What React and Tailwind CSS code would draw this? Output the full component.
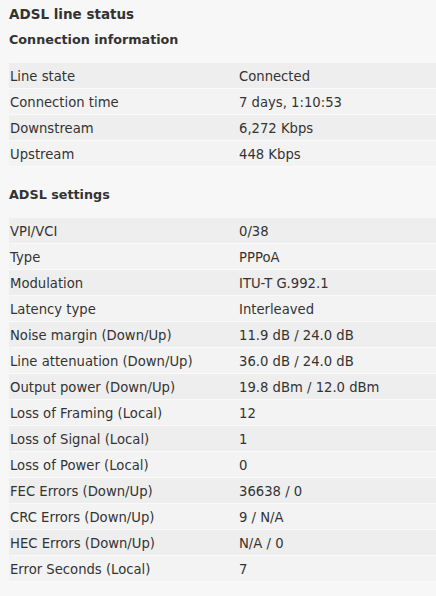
const connection = [
  ["Line state", "Connected"],
  ["Connection time", "7 days, 1:10:53"],
  ["Downstream", "6,272 Kbps"],
  ["Upstream", "448 Kbps"],
];

const settings = [
  ["VPI/VCI", "0/38"],
  ["Type", "PPPoA"],
  ["Modulation", "ITU-T G.992.1"],
  ["Latency type", "Interleaved"],
  ["Noise margin (Down/Up)", "11.9 dB / 24.0 dB"],
  ["Line attenuation (Down/Up)", "36.0 dB / 24.0 dB"],
  ["Output power (Down/Up)", "19.8 dBm / 12.0 dBm"],
  ["Loss of Framing (Local)", "12"],
  ["Loss of Signal (Local)", "1"],
  ["Loss of Power (Local)", "0"],
  ["FEC Errors (Down/Up)", "36638 / 0"],
  ["CRC Errors (Down/Up)", "9 / N/A"],
  ["HEC Errors (Down/Up)", "N/A / 0"],
  ["Error Seconds (Local)", "7"],
];

function InfoTable({ rows }) {
  return (
    <div className="flex flex-col">
      {rows.map(([label, value], i) => (
        <div
          key={label}
          className={`flex h-[26px] items-center border-b border-[#fafafa] pl-[1px] pt-[2px] ${
            i % 2 === 0 ? "bg-[#eeeeee]" : "bg-[#f3f3f3]"
          }`}
        >
          <span className="w-[229px] shrink-0">{label}</span>
          <span>{value}</span>
        </div>
      ))}
    </div>
  );
}

export default function App() {
  return (
    <div className="min-h-[596px] bg-[#f7f7f7] pl-[9px] pt-[5px] text-[13.2px] text-[#333] font-['DejaVu_Sans',sans-serif]">
      <h1 className="text-[13.5px] font-bold leading-[18px]">ADSL line status</h1>
      <h2 className="mt-[8px] text-[12.75px] font-bold leading-[18px]">Connection information</h2>
      <div className="mt-[14px]">
        <InfoTable rows={connection} />
      </div>
      <h2 className="mt-[19px] text-[12.75px] font-bold leading-[18px]">ADSL settings</h2>
      <div className="mt-[14px]">
        <InfoTable rows={settings} />
      </div>
    </div>
  );
}
